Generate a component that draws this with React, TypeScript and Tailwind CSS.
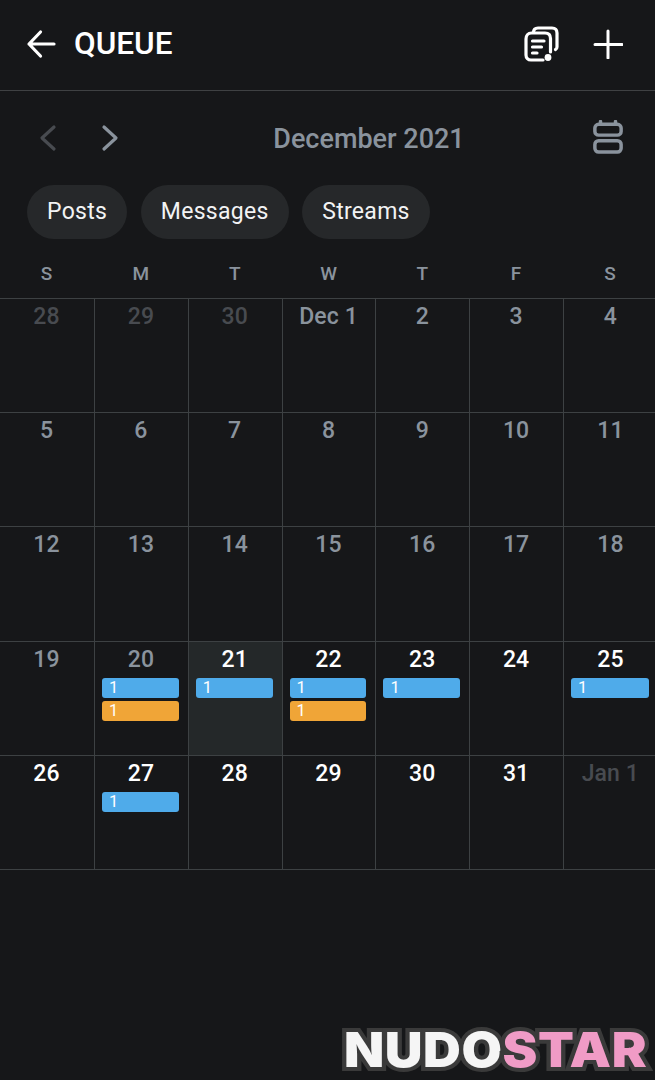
import React from 'react';

type Day = {
  label: string;
  tone: 'muted' | 'past' | 'future';
  today?: boolean;
  bars?: ('blue' | 'orange')[];
};

const past = (label: string, bars?: ('blue' | 'orange')[]): Day => ({ label, tone: 'past', bars });
const next = (label: string, bars?: ('blue' | 'orange')[]): Day => ({ label, tone: 'future', bars });
const muted = (label: string): Day => ({ label, tone: 'muted' });

const days: Day[] = [
  muted('28'), muted('29'), muted('30'), past('Dec 1'), past('2'), past('3'), past('4'),
  past('5'), past('6'), past('7'), past('8'), past('9'), past('10'), past('11'),
  past('12'), past('13'), past('14'), past('15'), past('16'), past('17'), past('18'),
  past('19'), past('20', ['blue', 'orange']),
  { label: '21', tone: 'future', today: true, bars: ['blue'] },
  next('22', ['blue', 'orange']), next('23', ['blue']), next('24'), next('25', ['blue']),
  next('26'), next('27', ['blue']), next('28'), next('29'), next('30'), next('31'), muted('Jan 1'),
];

const toneClass = {
  muted: 'text-[#484b50]',
  past: 'text-[#8a939d]',
  future: 'text-white',
};

function DayCell({ day, index }: { day: Day; index: number }) {
  return (
    <div
      className={`h-[114.2px] border-b border-[#3d4143] pt-[3px] ${index % 7 !== 6 ? 'border-r' : ''} ${
        day.today ? 'bg-[#242829]' : ''
      }`}
    >
      <div className={`pr-[1px] text-center text-[23px] font-medium leading-[30px] tracking-[0.1px] ${toneClass[day.tone]}`}>
        {day.label}
      </div>
      <div className="mt-[3px] flex flex-col gap-[3.500px] pl-[7px] pr-[9px]">
        {day.bars?.map((bar, i) => (
          <div
            key={i}
            className={`h-[20px] rounded-[3px] pl-[7px] text-[16.500px] leading-[20px] text-white ${
              bar === 'blue' ? 'bg-[#4fabea]' : 'bg-[#f0a537]'
            }`}
          >
            1
          </div>
        ))}
      </div>
    </div>
  );
}

export default function App() {
  return (
    <div className="relative h-[1080px] w-[655px] overflow-hidden bg-[#161719] font-['Roboto',sans-serif]">
      {/* header */}
      <div className="flex h-[91px] items-center justify-between border-b border-[#3f4143] pb-[3px] pl-[26px] pr-[32px]">
        <div className="flex items-center gap-[18px]">
          <svg width="30" height="30" viewBox="0 0 30 30" fill="none" stroke="#fff" strokeWidth="3.2" strokeLinecap="round" strokeLinejoin="round">
            <path d="M28 15H3M14.500 3 3 15l11.500 12" />
          </svg>
          <span className="text-[31.500px] font-medium leading-none text-white">QUEUE</span>
        </div>
        <div className="flex items-center gap-[33.500px]">
          <svg width="36" height="36" viewBox="0 0 36 36" fill="none" stroke="#fff" strokeWidth="3.2" strokeLinecap="round" strokeLinejoin="round">
            <path d="M9.500 6.500C9.500 3.500 11 2 14 2h14c3 0 5 1.500 5 5v14c0 1.500-.5 2-1.500 2.500" />
            <path d="M19 34H7c-3 0-5-2-5-5V13c-0-3.500 2-6 5.500-6H21c3.500 0 5.500 2 5.500 5.500V26" />
            <path d="M8.500 15H20M8.500 21H17.500M8.500 27H13" />
            <circle cx="24" cy="31.500" r="3.400" fill="#fff" stroke="none" />
          </svg>
          <svg width="30" height="30" viewBox="0 0 30 30" fill="none" stroke="#fff" strokeWidth="3" strokeLinecap="round">
            <path d="M15 2v27M2 15.500h27" />
          </svg>
        </div>
      </div>

      {/* month nav */}
      <div className="flex h-[94px] items-center justify-between pl-[39px] pr-[32px]">
        <div className="flex items-center gap-[44px]">
          <svg width="18" height="28" viewBox="0 0 18 28" fill="none" stroke="#484b50" strokeWidth="3.2" strokeLinecap="round" strokeLinejoin="round">
            <path d="M15 3 3 14l12 11" />
          </svg>
          <svg width="18" height="28" viewBox="0 0 18 28" fill="none" stroke="#8a939d" strokeWidth="3.2" strokeLinecap="round" strokeLinejoin="round">
            <path d="M3 3l12 11L3 25" />
          </svg>
        </div>
        <span className="ml-[26px] pt-[2px] text-[27px] font-medium text-[#8a939d]">December 2021</span>
        <svg className="mb-[2px]" width="30" height="34" viewBox="0 0 32 36" fill="none" stroke="#8a939d" strokeWidth="3.700" strokeLinecap="round">
          <rect x="2" y="4.500" width="28" height="11.500" rx="4" />
          <rect x="2" y="22" width="28" height="12" rx="4" />
          <path d="M8 1.500v3M24 1.500v3" />
        </svg>
      </div>

      {/* filter chips */}
      <div className="flex gap-[13.500px] pl-[27px]">
        {['Posts', 'Messages', 'Streams'].map((chip) => (
          <div
            key={chip}
            className="flex h-[54px] items-center rounded-full bg-[#26282a] px-[20px] text-[23px] tracking-[0.3px] text-[#f2f3f4]"
          >
            {chip}
          </div>
        ))}
      </div>

      {/* weekday row */}
      <div className="mt-[20px] grid h-[40px] w-[659px] grid-cols-[95px_repeat(6,93.8px)] border-b border-[#3d4143] pb-[15px]">
        {['S', 'M', 'T', 'W', 'T', 'F', 'S'].map((d, i) => (
          <div key={i} className="pr-[2px] text-center text-[19px] font-medium leading-[30px] text-[#8a939d]">
            {d}
          </div>
        ))}
      </div>

      {/* calendar */}
      <div className="grid w-[659px] grid-cols-[95px_repeat(6,93.8px)]">
        {days.map((day, i) => (
          <DayCell key={i} day={day} index={i} />
        ))}
      </div>

      {/* watermark */}
      <div className="absolute bottom-[0px] right-[8px] origin-right scale-x-[1.09] whitespace-nowrap font-['Inter',sans-serif] text-[48px] font-black leading-[60px] tracking-[0.5px] [-webkit-text-stroke:8px_#3a3a3a] [paint-order:stroke_fill]">
        <span className="text-[#f5f5f5]">NUDO</span>
        <span className="text-[#f09bc6]">STAR</span>
      </div>
    </div>
  );
}
